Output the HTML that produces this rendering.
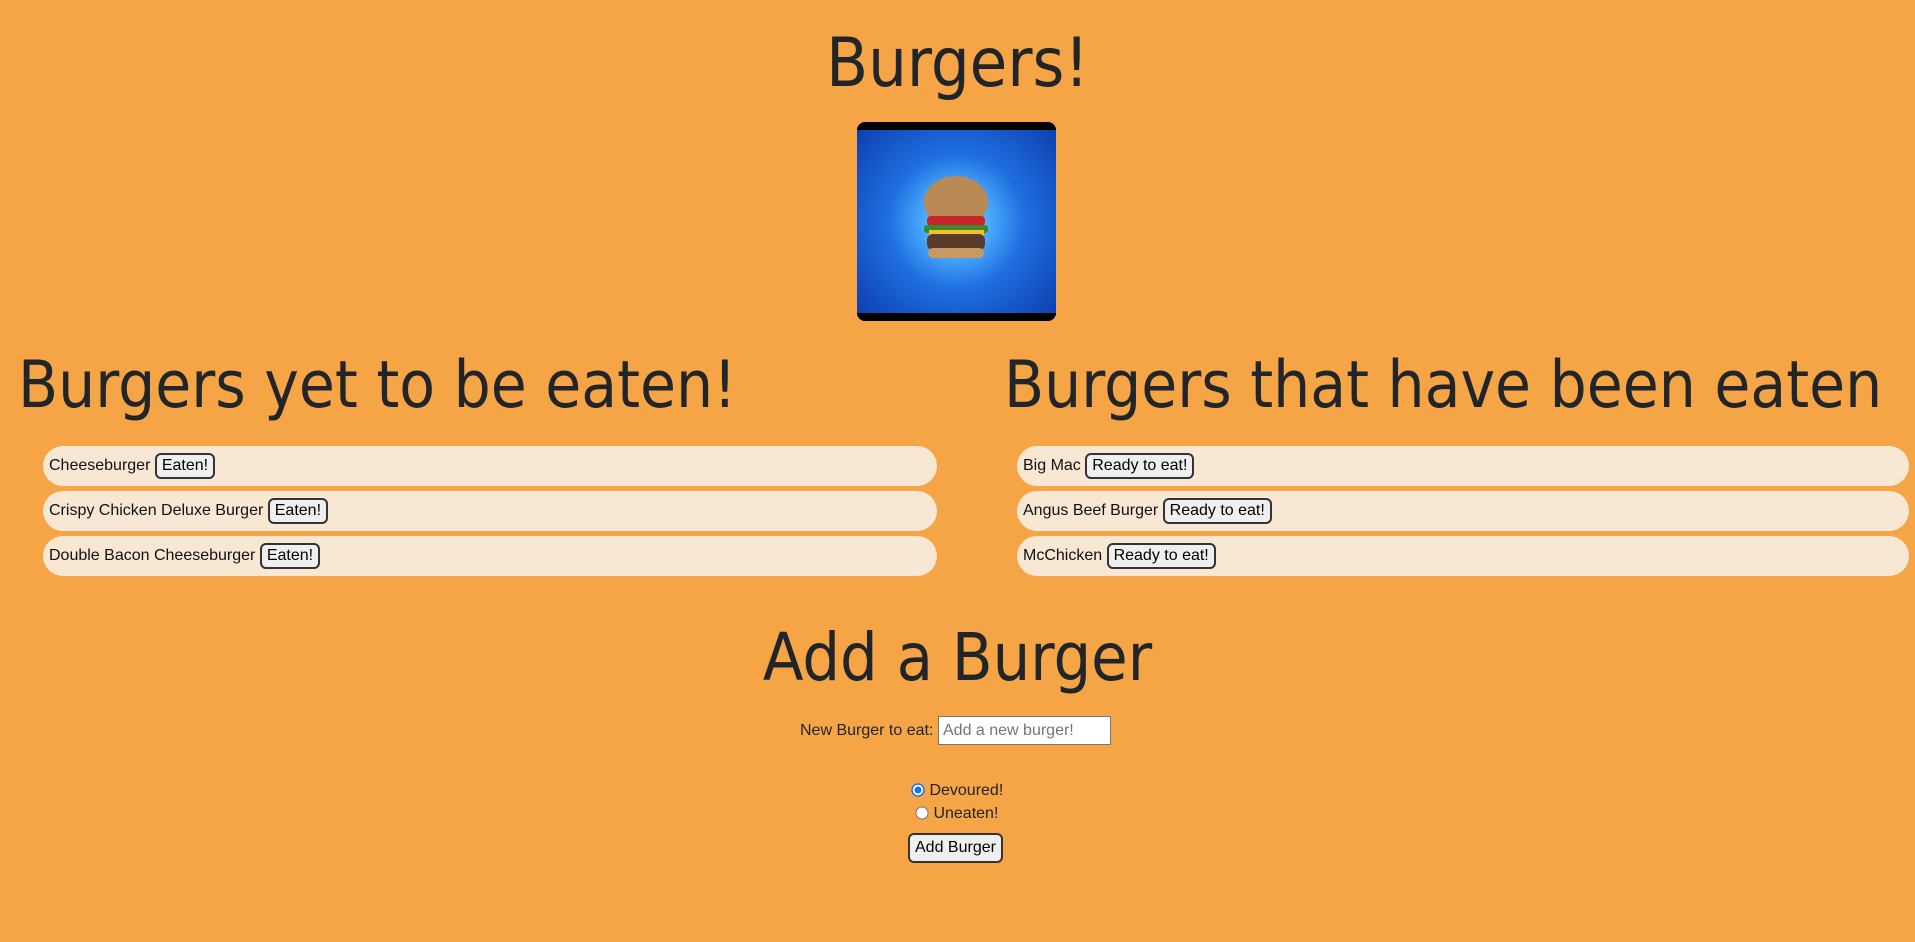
<!DOCTYPE html>
<html><head><meta charset="utf-8"><style>
html,body{margin:0;padding:0;}
body{width:1915px;height:942px;background:#f5a546;position:relative;overflow:hidden;font-family:"Liberation Sans",Arial,sans-serif;color:#212529;}
.h{position:absolute;font-family:"DejaVu Sans Condensed","DejaVu Sans","Liberation Sans",sans-serif;font-weight:300;color:#212529;white-space:nowrap;line-height:1;}
.c{left:0;width:1915px;text-align:center;}
.img{position:absolute;left:857px;top:122px;width:199px;height:199px;border-radius:8px;background:#000;overflow:hidden;}
.img .in{position:absolute;left:0;top:8px;width:199px;height:183px;background:radial-gradient(circle at 50% 50%,#7fe8ff 0,#4fb0ff 22%,#1f6fe0 50%,#0d3fb0 100%);}
.burger{position:absolute;left:62px;top:42px;width:75px;}
.item{position:absolute;height:40px;border-radius:20px;background:#f8e7d3;font-size:16px;line-height:40px;padding-left:6px;box-sizing:border-box;white-space:nowrap;color:#111;}
.item button,.btn{font-family:"Liberation Sans",Arial,sans-serif;font-size:16px;background:#efefef;border:2px solid #333;border-radius:6px;padding:2px 5px;color:#000;vertical-align:middle;}
.abs{position:absolute;white-space:nowrap;font-size:16px;}
</style></head><body>
<div class="h c" style="top:30px;font-size:68px;">Burgers!</div>
<div class="img"><div class="in">
<svg class="burger" viewBox="0 0 75 100" width="75" height="100">
<ellipse cx="37" cy="30" rx="32" ry="26" fill="#b98a55"/>
<rect x="8" y="44" width="58" height="10" rx="4" fill="#c8242a"/>
<rect x="5" y="53" width="64" height="8" rx="3" fill="#3a8a2a"/>
<rect x="10" y="58" width="55" height="6" fill="#f3c02a"/>
<rect x="8" y="62" width="58" height="16" rx="6" fill="#5a3b2c"/>
<rect x="9" y="76" width="56" height="10" rx="5" fill="#c69a60"/>
</svg></div></div>
<div class="h" style="left:18px;top:353px;font-size:65px;">Burgers yet to be eaten!</div>
<div class="h" style="left:1004px;top:353px;font-size:65px;">Burgers that have been eaten</div>

<div class="item" style="left:43px;top:446px;width:894px;">Cheeseburger <button>Eaten!</button></div>
<div class="item" style="left:43px;top:491px;width:894px;">Crispy Chicken Deluxe Burger <button>Eaten!</button></div>
<div class="item" style="left:43px;top:536px;width:894px;">Double Bacon Cheeseburger <button>Eaten!</button></div>

<div class="item" style="left:1017px;top:446px;width:892px;">Big Mac <button>Ready to eat!</button></div>
<div class="item" style="left:1017px;top:491px;width:892px;">Angus Beef Burger <button>Ready to eat!</button></div>
<div class="item" style="left:1017px;top:536px;width:892px;">McChicken <button>Ready to eat!</button></div>

<div class="h c" style="top:625px;font-size:66px;">Add a Burger</div>
<div class="abs" style="left:800px;top:722px;">New Burger to eat:</div>
<div class="abs" style="left:938px;top:716px;width:173px;height:29px;background:#fff;border:1px solid #767676;box-sizing:border-box;color:#757575;line-height:27px;padding-left:4px;">Add a new burger!</div>
<div class="abs" style="left:911px;top:782px;"><svg width="14" height="14" style="vertical-align:-2px"><circle cx="7" cy="7" r="6" fill="#fff" stroke="#1a73e8" stroke-width="1.5"/><circle cx="7" cy="7" r="3.5" fill="#1a73e8"/></svg> Devoured!</div>
<div class="abs" style="left:915px;top:805px;"><svg width="14" height="14" style="vertical-align:-2px"><circle cx="7" cy="7" r="6" fill="#fff" stroke="#767676" stroke-width="1"/></svg> Uneaten!</div>
<button class="btn abs" style="left:908px;top:833px;height:30px;margin:0;">Add Burger</button>
</body></html>
